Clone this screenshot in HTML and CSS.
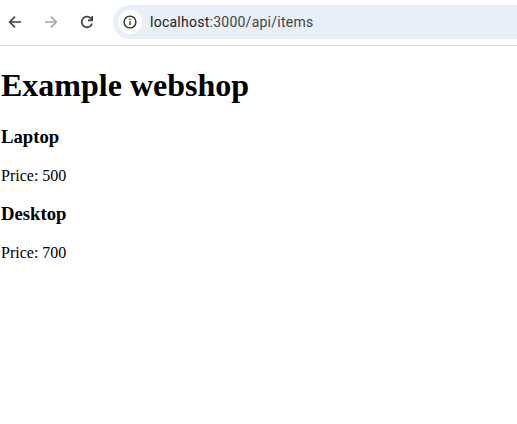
FILE: index.html
```html
<!DOCTYPE html>
<html lang="en">
<head>
<meta charset="utf-8">
<title>Example webshop</title>
<link rel="stylesheet" href="styles.css">
</head>
<body>
<header class="toolbar">
  <svg class="nav back" viewBox="0 0 16 16"><path d="M14 8H3.2M8 2.7 2.7 8 8 13.3"/></svg>
  <svg class="nav forward" viewBox="0 0 16 16"><path d="M2 8h10.8M8 2.7 13.3 8 8 13.3"/></svg>
  <svg class="nav reload" viewBox="0 0 16 16"><path d="M13.1 9.4A5.3 5.3 0 1 1 11.8 4.3L13.2 5.7M13.2 2V6.3H9"/></svg>
  <div class="address">
    <span class="info"><svg viewBox="0 0 16 16"><circle cx="8" cy="8" r="5.9"/><path d="M8 7.3v3.7M8 4.8v1.4"/></svg></span>
    <span class="url">localhost<span class="path">:3000/api/items</span></span>
  </div>
</header>
<main class="page">
  <h1>Example webshop</h1>
  <h3>Laptop</h3>
  <p>Price: 500</p>
  <h3>Desktop</h3>
  <p>Price: 700</p>
</main>
</body>
</html>
```
FILE: styles.css
```css
body {
  margin: 0;
  background: #fff;
  color: #000;
  font-family: "Liberation Serif", serif;
  overflow: hidden;
}
.toolbar {
  display: flex;
  align-items: center;
  box-sizing: border-box;
  height: 46px;
  padding: 0 0 2px 7px;
  border-bottom: 1px solid #dadada;
}
.nav {
  width: 16px;
  height: 16px;
  margin-right: 20px;
  fill: none;
  stroke: #434343;
  stroke-width: 1.7;
}
.forward { stroke: #a5a5a5; }
.reload { margin-right: 18px; }
.address {
  display: flex;
  flex: 1;
  align-items: center;
  height: 34px;
  padding-left: 5px;
  border-radius: 17px 0 0 17px;
  background: #e9eff9;
}
.info {
  display: flex;
  align-items: center;
  justify-content: center;
  width: 24px;
  height: 24px;
  margin-right: 8px;
  border-radius: 50%;
  background: #fff;
}
.info svg {
  width: 16px;
  height: 16px;
  fill: none;
  stroke: #303030;
  stroke-width: 1.4;
}
.url {
  font: 14px Roboto, sans-serif;
  letter-spacing: 0.25px;
  color: #202124;
}
.path { color: #414345; }
.page { padding: 21px 1px; }
h1 { margin: 0 0 22px; font-size: 32px; line-height: 37px; }
h3 { margin: 0 0 20px; font-size: 18.72px; line-height: 21px; }
p { margin: 0 0 18px; font-size: 16px; line-height: 18px; }
```
